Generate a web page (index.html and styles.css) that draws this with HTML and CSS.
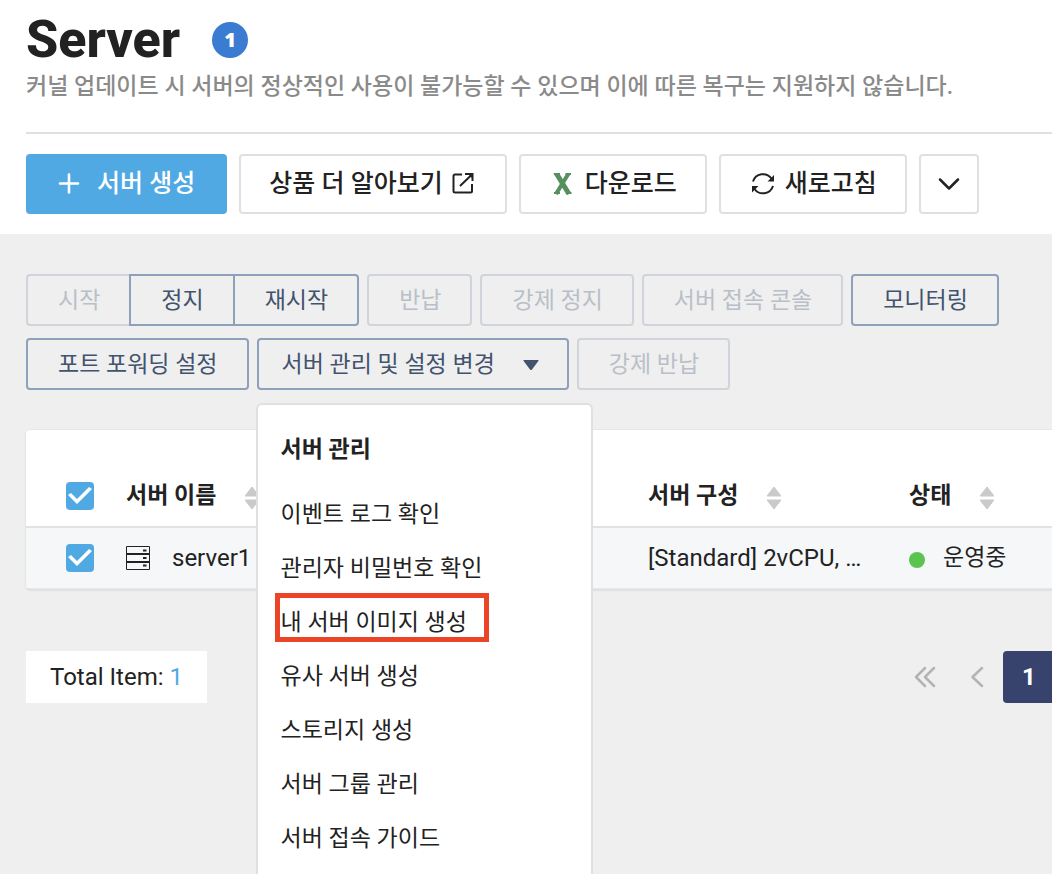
FILE: index.html
```html
<!DOCTYPE html>
<html lang="ko">
<head>
<meta charset="utf-8">
<meta name="viewport" content="width=device-width, initial-scale=1">
<title>Server</title>
<link rel="stylesheet" href="styles.css">
</head>
<body>
<div class="app">
  <header class="page-head">
    <div class="title-row">
      <h1 class="title">Server</h1>
      <span class="badge">1</span>
    </div>
    <p class="subtitle">커널 업데이트 시 서버의 정상적인 사용이 불가능할 수 있으며 이에 따른 복구는 지원하지 않습니다.</p>
    <div class="toolbar">
      <button class="btn btn-primary" type="button">
        <svg class="icon-plus" width="22" height="22" viewBox="0 0 22 22" fill="none" stroke="currentColor" stroke-width="2.600" stroke-linecap="round"><path d="M11 1.500v18M2 10.500h18"/></svg>
        서버 생성
      </button>
      <button class="btn" type="button">
        상품 더 알아보기
        <svg class="icon-link" width="22" height="22" viewBox="0 0 22 22" fill="none" stroke="currentColor" stroke-width="2"><path d="M10 1.500H3A1.500 1.500 0 0 0 1.500 3v15A1.500 1.500 0 0 0 3 19.500h15.500A1.500 1.500 0 0 0 20 18v-7M8 13 20 1.500M13 1h7.500v7"/><path d="M15 0h6v6z" fill="currentColor" stroke="none"/></svg>
      </button>
      <button class="btn" type="button">
        <svg class="icon-excel" width="20" height="22" viewBox="0 0 20 22" fill="none" stroke="#56905f"><path d="M2.500-1 16 21" stroke-width="5"/><path d="M16.500-1 3 21" stroke-width="4"/><path d="M1 20h6M13 20h5.500M1 1h6M12.500 1h5.500" stroke-width="2"/></svg>
        다운로드
      </button>
      <button class="btn" type="button">
        <svg class="icon-refresh" width="24" height="24" viewBox="0 0 24 24" fill="none" stroke="currentColor" stroke-width="2"><path d="M2 9.500A10.500 10.500 0 0 1 20.500 6.500M22 14A10.500 10.500 0 0 1 3.500 17"/><path d="M23 3v6.500h-6.500zM1 20.500V14h6.500z" fill="currentColor" stroke="none"/></svg>
        새로고침
      </button>
      <button class="btn btn-more" type="button" aria-label="더보기">
        <svg width="22" height="14" viewBox="0 0 22 14" fill="none" stroke="currentColor" stroke-width="2.500" stroke-linecap="round" stroke-linejoin="round"><path d="M2 2.500 11 11.500 20 2.500"/></svg>
      </button>
    </div>
  </header>

  <main class="content">
    <div class="actions">
      <div class="group">
        <button class="act" type="button" disabled>시작</button>
        <button class="act" type="button">정지</button>
        <button class="act" type="button">재시작</button>
      </div>
      <button class="act" type="button" disabled>반납</button>
      <button class="act" type="button" disabled>강제 정지</button>
      <button class="act" type="button" disabled>서버 접속 콘솔</button>
      <button class="act" type="button">모니터링</button>
      <button class="act" type="button">포트 포워딩 설정</button>
      <div class="dropdown">
        <button class="act act-drop" type="button" aria-expanded="true" aria-haspopup="true">
          서버 관리 및 설정 변경
          <svg width="16" height="12" viewBox="0 0 16 12"><path d="M1 1h14q1 0 .4 1L9 10.500q-1 1-2 0L.6 2Q0 1 1 1z" fill="currentColor"/></svg>
        </button>
        <div class="menu">
          <h2 class="menu-title">서버 관리</h2>
          <ul class="menu-list">
            <li><button class="menu-item" type="button">이벤트 로그 확인</button></li>
            <li><button class="menu-item" type="button">관리자 비밀번호 확인</button></li>
            <li><button class="menu-item marked" type="button">내 서버 이미지 생성</button></li>
            <li><button class="menu-item" type="button">유사 서버 생성</button></li>
            <li><button class="menu-item" type="button">스토리지 생성</button></li>
            <li><button class="menu-item" type="button">서버 그룹 관리</button></li>
            <li><button class="menu-item" type="button">서버 접속 가이드</button></li>
          </ul>
        </div>
      </div>
      <button class="act" type="button" disabled>강제 반납</button>
    </div>

    <table class="servers">
      <colgroup><col class="col-check"><col class="col-name"><col class="col-spec"><col class="col-state"></colgroup>
      <thead>
        <tr>
          <th class="check-cell"><input class="check" type="checkbox" checked aria-label="전체 선택"></th>
          <th><span class="th-label">서버 이름<svg class="sort" width="14" height="22" viewBox="0 0 14 22"><path d="M7 0 14 9H0zM7 22 0 13h14z" fill="#cacaca" stroke="#cacaca" stroke-linejoin="round"/></svg></span></th>
          <th><span class="th-label">서버 구성<svg class="sort" width="14" height="22" viewBox="0 0 14 22"><path d="M7 0 14 9H0zM7 22 0 13h14z" fill="#cacaca" stroke="#cacaca" stroke-linejoin="round"/></svg></span></th>
          <th><span class="th-label">상태<svg class="sort" width="14" height="22" viewBox="0 0 14 22"><path d="M7 0 14 9H0zM7 22 0 13h14z" fill="#cacaca" stroke="#cacaca" stroke-linejoin="round"/></svg></span></th>
        </tr>
      </thead>
      <tbody>
        <tr>
          <td class="check-cell"><input class="check" type="checkbox" checked aria-label="server1 선택"></td>
          <td><span class="name"><svg width="24" height="24" viewBox="0 0 24 24" fill="none" stroke="#222"><path d="M.5.500h23v23H.5z"/><path d="M0 8h24M0 16h24" stroke-width="2"/><path d="M17 4.500h3.500M17 12h3.500M17 19.500h3.500" stroke-width="2"/></svg>server1</span></td>
          <td>[Standard] 2vCPU, …</td>
          <td><span class="state">운영중</span></td>
        </tr>
      </tbody>
    </table>

    <div class="foot">
      <p class="total">Total Item: <span class="total-num">1</span></p>
      <nav class="pager" aria-label="페이지">
        <button class="page-btn" type="button" aria-label="처음"><svg width="22" height="22" viewBox="0 0 22 22" fill="none" stroke="#b3b3b3" stroke-width="2.500" stroke-linecap="round" stroke-linejoin="round"><path d="M11 2 2 11l9 9M20 2l-9 9 9 9"/></svg></button>
        <button class="page-btn" type="button" aria-label="이전"><svg width="14" height="22" viewBox="0 0 14 22" fill="none" stroke="#b3b3b3" stroke-width="2.500" stroke-linecap="round" stroke-linejoin="round"><path d="M12 2 2.500 11l9.500 9"/></svg></button>
        <button class="page-btn current" type="button" aria-current="page">1</button>
      </nav>
    </div>
  </main>
</div>
</body>
</html>
```

FILE: styles.css
```css
* {
  box-sizing: border-box;
}

body {
  margin: 0;
  background: #efefef;
  color: #222;
  font-family: Roboto, "Noto Sans CJK KR", sans-serif;
  font-size: 24px;
}

h1, h2, p, ul {
  margin: 0;
  padding: 0;
}

ul {
  list-style: none;
}

button {
  font: inherit;
  color: inherit;
  margin: 0;
  cursor: pointer;
}

svg {
  display: block;
  flex: none;
}

.app {
  height: 100vh;
  overflow: hidden;
}

/* Page header */
.page-head {
  background: #fff;
  padding: 12px 0 20px 26px;
}

.title-row {
  display: flex;
  align-items: center;
  gap: 32px;
  height: 56px;
}

.title {
  font-size: 52px;
  line-height: 56px;
  font-weight: 800;
}

.badge {
  width: 36px;
  height: 36px;
  border-radius: 50%;
  background: #3b7bd1;
  color: #fff;
  font-family: "Open Sans", sans-serif;
  font-size: 20px;
  font-weight: 800;
  line-height: 36px;
  text-align: center;
}

.subtitle {
  color: #8a8a8a;
  font-size: 23px;
  font-weight: 500;
  line-height: 34px;
  padding: 2px 0 28px;
  border-bottom: 2px solid #e0e0e0;
  white-space: nowrap;
}

.toolbar {
  display: flex;
  gap: 12px;
  margin-top: 20px;
}

.btn {
  display: flex;
  align-items: center;
  height: 60px;
  padding: 0 28px;
  border: 2px solid #e0e0e0;
  border-radius: 4px;
  background: #fff;
  font-size: 25px;
  font-weight: 500;
  line-height: 36px;
  white-space: nowrap;
}

.btn-primary {
  background: #51a9e4;
  border-color: #51a9e4;
  color: #fff;
  padding: 0 30px;
}

.icon-plus {
  margin-right: 17px;
}

.icon-link {
  margin: 0 3px 0 9px;
}

.icon-excel {
  margin: 0 12px 0 4px;
}

.icon-refresh {
  margin: 0 10px 0 2px;
}

.btn-more {
  width: 60px;
  justify-content: center;
  padding: 0;
}

/* Action buttons */
.content {
  padding: 40px 0 0 26px;
}

.actions {
  display: flex;
  flex-wrap: wrap;
  gap: 12px 8px;
  padding-right: 26px;
}

.act {
  height: 52px;
  padding: 1px 29px 0 30px;
  border: 2px solid #8fa0ba;
  border-radius: 4px;
  background: transparent;
  color: #42536e;
  font-size: 23px;
  line-height: 34px;
  white-space: nowrap;
}

.act:disabled {
  border-color: #d0d5db;
  color: #b9bfc8;
  cursor: default;
}

.group {
  display: flex;
}

.group .act:not(:last-child) {
  border-right: 0;
  border-top-right-radius: 0;
  border-bottom-right-radius: 0;
}

.group .act:not(:first-child) {
  border-top-left-radius: 0;
  border-bottom-left-radius: 0;
}

.dropdown {
  position: relative;
}

.act-drop {
  display: flex;
  align-items: center;
  gap: 28px;
  padding: 1px 28px 0 23px;
}

/* Dropdown menu */
.menu {
  position: absolute;
  z-index: 2;
  top: 65px;
  left: -1px;
  width: 337px;
  padding: 18px 23px 36px;
  border: 2px solid #e0e0e0;
  border-radius: 6px;
  background: #fff;
}

.menu-title {
  margin-bottom: 11px;
  font-size: 23px;
  font-weight: 700;
  line-height: 54px;
}

.menu-item {
  position: relative;
  display: block;
  padding: 0;
  border: 0;
  background: none;
  font-size: 23px;
  line-height: 54px;
  white-space: nowrap;
}

.marked::after {
  content: "";
  position: absolute;
  box-sizing: border-box;
  top: -3px;
  left: -6px;
  width: 214px;
  height: 49px;
  border: 5px solid #ec4427;
}

/* Server table */
.servers {
  width: 100%;
  margin-top: 40px;
  table-layout: fixed;
  border-collapse: separate;
  border-spacing: 0;
  background: #fff;
  border-radius: 4px 0 0 4px;
  box-shadow: 0 0 0 1px #e6e7e8, 0 2px 1px 1px #dfe0e1;
}

.col-check {
  width: 100px;
}

.col-name {
  width: 522px;
}

.col-spec {
  width: 261px;
}

.servers th,
.servers td {
  padding: 0;
  text-align: left;
  white-space: nowrap;
}

.servers th {
  height: 98px;
  padding-top: 36px;
  border-bottom: 2px solid #e0e2e4;
  font-size: 23px;
  font-weight: 700;
}

.servers td {
  height: 60px;
  background: #f5f7f9;
}

.servers .check-cell {
  padding-left: 40px;
}

.th-label {
  display: flex;
  align-items: center;
  gap: 29px;
  line-height: 34px;
}

.sort {
  margin-top: 3px;
}

.check {
  appearance: none;
  display: block;
  width: 28px;
  height: 28px;
  margin: 0;
  border-radius: 4px;
  background: #51a9e4;
}

.check:checked::before {
  content: "";
  display: block;
  width: 28px;
  height: 28px;
  background: #fff;
  clip-path: polygon(2px 13px, 5px 11px, 11px 17px, 23px 5px, 26px 7px, 11px 22px);
}

.name {
  display: flex;
  align-items: center;
  gap: 22px;
}

.state {
  display: flex;
  align-items: center;
  gap: 18px;
  font-size: 23px;
  line-height: 34px;
}

.state::before {
  content: "";
  width: 16px;
  height: 16px;
  margin-top: 4px;
  border-radius: 50%;
  background: #5ac44f;
}

/* Table footer */
.foot {
  display: flex;
  justify-content: space-between;
  align-items: center;
  margin: 63px -3px 0 0;
}

.total {
  padding: 0 24px;
  background: #fff;
  line-height: 52px;
}

.total-num {
  color: #51a9e4;
}

.pager {
  display: flex;
  align-items: center;
}

.page-btn {
  display: grid;
  place-items: center;
  height: 52px;
  padding: 0;
  border: 0;
  background: none;
  width: 52px;
}

.page-btn.current {
  border-radius: 4px;
  background: #37436d;
  color: #fff;
  font-weight: 700;
}
```
